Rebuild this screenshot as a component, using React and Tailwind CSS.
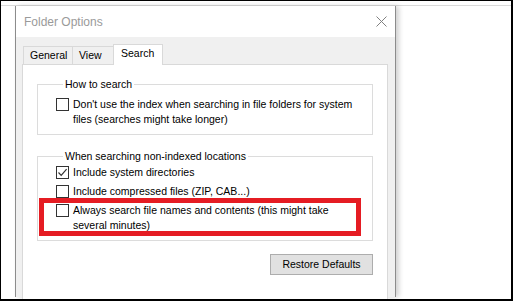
import React from "react";

function CheckBox({ checked }) {
  return (
    <span className="w-[13px] h-[13px] shrink-0 border border-[#333] bg-white flex items-center justify-center">
      {checked && (
        <svg width="11" height="11" viewBox="0 0 11 11">
          <path d="M1.5 5.5 L4.2 8.3 L9.6 2.2" fill="none" stroke="#333" strokeWidth="1.2" />
        </svg>
      )}
    </span>
  );
}

function Option({ checked, children, className = "" }) {
  return (
    <div className={`flex items-start gap-[4px] ${className}`}>
      <div className="h-[15px] flex items-center">
        <CheckBox checked={checked} />
      </div>
      <div className="leading-[15px]">{children}</div>
    </div>
  );
}

function GroupBox({ title, children, className = "" }) {
  return (
    <fieldset className={`border border-[#dcdcdc] pl-[18px] pr-[8px] ${className}`}>
      <legend className="ml-[7px] px-[2px] leading-[13px]">{title}</legend>
      {children}
    </fieldset>
  );
}

export default function App() {
  return (
    <div
      className="w-[513px] h-[301px] overflow-hidden bg-white border-black border-t border-l border-r-2 border-b-2 text-[10.5px] text-black"
      style={{ fontFamily: '"Liberation Sans", Arial, sans-serif' }}
    >
      <div className="h-[4px]" />
      <div className="h-px bg-[#dadada]" />
      <div className="ml-[14px] w-[381px] border-x border-[#8c8c8c] shadow-[3px_0_5px_rgba(0,0,0,0.18)]">
        <div className="h-[31px] bg-white flex items-center justify-between pl-[8px] pr-[8px]">
          <span className="text-[12px] text-[#9a9a9a] mt-[1px]">Folder Options</span>
          <svg width="11" height="11" viewBox="0 0 11 11">
            <path d="M0.5 0.5 L10.5 10.5 M10.5 0.5 L0.5 10.5" stroke="#808080" strokeWidth="1" />
          </svg>
        </div>
        <div className="bg-[#f0f0f0] pt-[7px] h-[260px]">
          <div className="flex items-start pl-[7px] relative z-10 -mb-px h-[21px]">
            <div className="mt-[2px] h-[18px] w-[50px] border border-b-0 border-[#d9d9d9] flex items-center pl-[6px]">
              General
            </div>
            <div className="mt-[2px] h-[18px] w-[40px] border-t border-[#d9d9d9] flex items-center pl-[6px]">
              View
            </div>
            <div className="h-[21px] w-[50px] bg-white border border-b-0 border-[#d9d9d9] flex items-center pl-[7px] pb-[2px]">
              Search
            </div>
          </div>
          <div className="ml-[6px] mr-[7px] h-[240px] bg-white border border-[#d9d9d9] px-[14px] pt-[13px]">
            <GroupBox title="How to search" className="pb-[7px]">
              <Option className="mt-[6px]">
                Don't use the index when searching in file folders for system
                <br />
                files (searches might take longer)
              </Option>
            </GroupBox>
            <GroupBox title="When searching non-indexed locations" className="mt-[15px] pb-[7px]">
              <div className="mt-[2px] flex flex-col gap-[4px]">
                <Option checked>Include system directories</Option>
                <Option>Include compressed files (ZIP, CAB...)</Option>
                <div className="relative">
                  <Option>
                    Always search file names and contents (this might take
                    <br />
                    several minutes)
                  </Option>
                  <div className="absolute left-[-17px] top-[-5px] w-[322px] h-[38px] border-[5px] border-[#e51c23]" />
                </div>
              </div>
            </GroupBox>
            <div className="flex justify-end mt-[13px]">
              <button className="w-[103px] h-[21px] bg-[#e1e1e1] border border-[#adadad] flex items-center justify-center">
                Restore Defaults
              </button>
            </div>
          </div>
        </div>
      </div>
    </div>
  );
}
